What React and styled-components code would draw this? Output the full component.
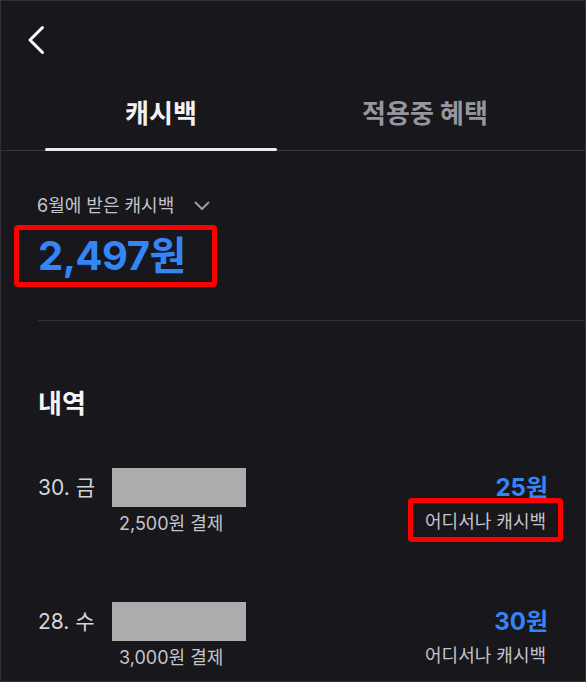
import React from 'react';
import styled, { createGlobalStyle } from 'styled-components';

const GlobalStyle = createGlobalStyle`
  html, body {
    margin: 0;
    padding: 0;
    background: #17171c;
  }

  body {
    font-family: Inter, 'Noto Sans CJK KR', sans-serif;
    -webkit-font-smoothing: antialiased;
  }
`;

const StyledScreen = styled.div`
  width: 586px;
  height: 682px;
  box-sizing: border-box;
  border: 1px solid #303036;
  background: #17171c;
  overflow: hidden;
  color: #ffffff;
`;

const StyledHeader = styled.header`
  height: 97px;
  box-sizing: border-box;
  padding: 24px 0 0 26px;
`;

const StyledBackButton = styled.button`
  display: block;
  width: 18px;
  height: 30px;
  padding: 0;
  border: none;
  background: none;
  cursor: pointer;
`;

const StyledTabs = styled.nav`
  display: flex;
  gap: 32px;
  padding: 0 44px;
  border-bottom: 1px solid #34343a;
`;

const StyledTab = styled.div`
  position: relative;
  flex: 1;
  padding-bottom: 21px;
  margin-bottom: -1px;
  text-align: center;
  font-size: 26px;
  line-height: 32px;
  font-weight: 700;
  color: ${({ active }) => (active ? '#f2f2f4' : '#96969c')};

  &::after {
    content: '';
    position: absolute;
    left: 0;
    right: 0;
    bottom: 0;
    height: 3px;
    border-radius: 2px;
    background: ${({ active }) => (active ? '#ececef' : 'transparent')};
  }
`;

const StyledSummary = styled.section`
  padding: 43px 36px 0;
`;

const StyledMonthPicker = styled.div`
  display: flex;
  align-items: center;
  gap: 20px;
  font-size: 18px;
  line-height: 24px;
  color: #c4c4c9;
`;

const StyledHighlight = styled.div`
  display: inline-block;
  margin: 7px 0 0 -23px;
  padding: 0 26px 0 19px;
  border: 5px solid ${({ marked }) => (marked ? '#ff0000' : 'transparent')};
  border-radius: 4px;
`;

const StyledTotal = styled.div`
  font-size: 40px;
  line-height: 52px;
  font-weight: 700;
  color: #3485f7;
  letter-spacing: -0.5px;
`;

const StyledDivider = styled.hr`
  margin: 33px 0 0 37px;
  border: none;
  border-top: 1px solid #303036;
`;

const StyledHistory = styled.section`
  padding: 66px 37px 0;
`;

const StyledHistoryTitle = styled.h2`
  margin: 0 0 47px;
  font-size: 26px;
  line-height: 34px;
  font-weight: 700;
  color: #f4f4f6;
`;

const StyledList = styled.div`
  display: flex;
  flex-direction: column;
  gap: 60px;
`;

const StyledRow = styled.div`
  display: flex;
  align-items: flex-start;
`;

const StyledDate = styled.div`
  width: 74px;
  padding-top: 7px;
  font-size: 21px;
  line-height: 26px;
  color: #d4d4d8;
`;

const StyledMerchant = styled.div`
  display: flex;
  flex-direction: column;
`;

const StyledRedacted = styled.div`
  width: 134px;
  height: 39px;
  background: #acacac;
`;

const StyledPaid = styled.div`
  margin: 5px 0 0 7px;
  font-size: 18px;
  line-height: 24px;
  color: #c4c4c9;
`;

const StyledReward = styled.div`
  margin-left: auto;
  padding-top: 7px;
  display: flex;
  flex-direction: column;
  align-items: flex-end;
`;

const StyledAmount = styled.div`
  font-size: 24px;
  line-height: 26px;
  font-weight: 700;
  color: #3485f7;
`;

const StyledTag = styled.div`
  margin: -3px -15px 0 0;
  padding: 7px 12px 3px;
  border: 5px solid ${({ marked }) => (marked ? '#ff0000' : 'transparent')};
  border-radius: 4px;
  font-size: 18px;
  line-height: 24px;
  color: #c4c4c9;
`;

const BackIcon = () => (
  <svg width="18" height="30" viewBox="0 0 18 30" fill="none">
    <polyline
      points="15.5,2.5 3,15 15.5,27.5"
      stroke="#ffffff"
      strokeWidth="3"
      strokeLinecap="round"
      strokeLinejoin="round"
    />
  </svg>
);

const ChevronDown = () => (
  <svg width="16" height="10" viewBox="0 0 16 10" fill="none">
    <polyline
      points="1.5,1.5 8,8 14.5,1.5"
      stroke="#9c9ca2"
      strokeWidth="2"
      strokeLinecap="round"
      strokeLinejoin="round"
    />
  </svg>
);

const history = [
  { date: '30. 금', paid: '2,500원 결제', amount: '25원', tag: '어디서나 캐시백', marked: true },
  { date: '28. 수', paid: '3,000원 결제', amount: '30원', tag: '어디서나 캐시백', marked: false },
];

const App = () => (
  <>
    <GlobalStyle />
    <StyledScreen>
      <StyledHeader>
        <StyledBackButton aria-label="뒤로">
          <BackIcon />
        </StyledBackButton>
      </StyledHeader>

      <StyledTabs>
        <StyledTab active>캐시백</StyledTab>
        <StyledTab>적용중 혜택</StyledTab>
      </StyledTabs>

      <StyledSummary>
        <StyledMonthPicker>
          6월에 받은 캐시백
          <ChevronDown />
        </StyledMonthPicker>
        <StyledHighlight marked>
          <StyledTotal>2,497원</StyledTotal>
        </StyledHighlight>
      </StyledSummary>

      <StyledDivider />

      <StyledHistory>
        <StyledHistoryTitle>내역</StyledHistoryTitle>
        <StyledList>
          {history.map((item) => (
            <StyledRow key={item.date}>
              <StyledDate>{item.date}</StyledDate>
              <StyledMerchant>
                <StyledRedacted />
                <StyledPaid>{item.paid}</StyledPaid>
              </StyledMerchant>
              <StyledReward>
                <StyledAmount>{item.amount}</StyledAmount>
                <StyledTag marked={item.marked}>{item.tag}</StyledTag>
              </StyledReward>
            </StyledRow>
          ))}
        </StyledList>
      </StyledHistory>
    </StyledScreen>
  </>
);

export default App;
